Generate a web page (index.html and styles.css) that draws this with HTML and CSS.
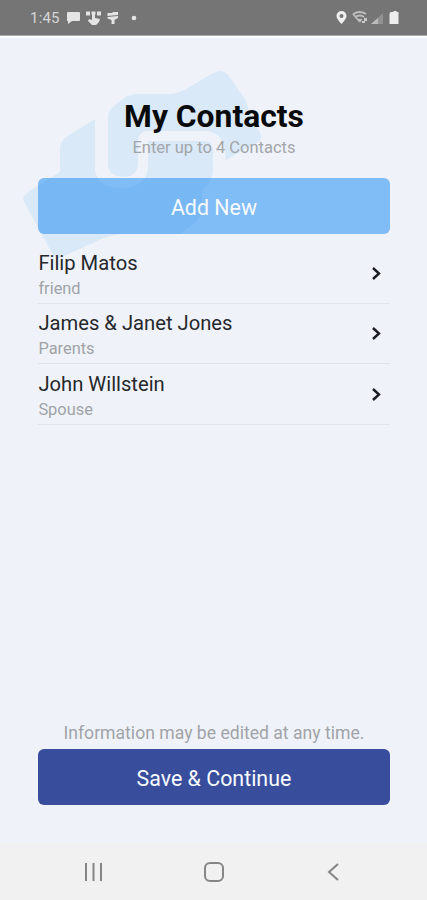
FILE: index.html
```
<!DOCTYPE html>
<html lang="en">
<head>
<meta charset="utf-8">
<title>My Contacts</title>
<link rel="stylesheet" href="styles.css">
</head>
<body>
<div class="screen">
  <header class="status">
    <span class="time">1:45</span>
    <svg class="status-left" width="72" height="16" viewBox="0 0 72 16" fill="#e4e4e4">
      <path d="M2 2h11q1 0 1 1v7q0 1-1 1H6l-4 3V11H1V3q0-1 1-1z"/>
      <path d="M20 1.500h4v4h-4zM25.500 1.500h4v3h-4zM31 1.500h4v4h-4zM26 4h3v4l5 1-1 3-3 3h-4l-4-4 1-2 3 1z"/>
      <path d="M41.500 3h4l2-1h4.500v3l-10.500 1zM41.500 7l10.500-1v2l-3.500 2v4h-3v-4l-4-1.500z"/>
      <circle cx="68" cy="8" r="2.300"/>
    </svg>
    <svg class="status-right" width="66" height="16" viewBox="0 0 66 16">
      <path fill="#eee" fill-rule="evenodd" d="M6.500 1a5 5 0 0 1 5 5c0 3-5 8-5 8s-5-5-5-8a5 5 0 0 1 5-5zm0 3a2 2 0 1 0 0 4 2 2 0 0 0 0-4z"/>
      <g fill="none" stroke="#bdbdbd" stroke-width="1.800"><path d="M18 4q7-4 13 0M20 7q5-3 9 0M18 4l7 8"/></g>
      <path d="M23 9h4l-1 3zM29 8h3v3h-3zM27 11h3v2h-3z" fill="#c8c8c8"/>
      <path d="M36 14L48 3v11z" fill="#929292"/><path d="M36 14l7-6v6z" fill="#bbb"/>
      <path d="M56.500 2h2V1h3v1h2v12h-9V4q0-2 2-2z" fill="#eee"/>
    </svg>
  </header>
  <main class="content">
    <svg class="watermark" width="250" height="200" viewBox="20 65 250 200" fill="#dae9f7">
      <path d="M108 165V117Q108 111 113 107L124 98Q130 94 137 94H172Q179 93 186 89L213 73Q222 68 228 75L245 99Q251 118 260 133Q264 139 257 143L226 160L225 149Q221 131 205 131H147Q138 132 138 141V164Q137 177 123 177Q109 176 108 165Z"/>
      <path d="M95 119V170Q98 188 121 188Q146 188 148 167V141H204Q213 141 213 150V172Q211 183 202 190V209Q201 219 190 227L180 234H121Q107 236 95 242L62 257Q56 259 52 253L24 202Q21 196 30 191L60 172V149Q60 142 66 137Z"/>
    </svg>
    <h1>My Contacts</h1>
    <p class="subtitle">Enter up to 4 Contacts</p>
    <button class="button add">Add New</button>
    <ul class="contacts">
      <li><div><div class="name">Filip Matos</div><div class="role">friend</div></div><svg width="12" height="16" viewBox="0 0 12 16"><path d="M2 3l6 5.500L2 14"/></svg></li>
      <li><div><div class="name">James &amp; Janet Jones</div><div class="role">Parents</div></div><svg width="12" height="16" viewBox="0 0 12 16"><path d="M2 3l6 5.500L2 14"/></svg></li>
      <li><div><div class="name">John Willstein</div><div class="role">Spouse</div></div><svg width="12" height="16" viewBox="0 0 12 16"><path d="M2 3l6 5.500L2 14"/></svg></li>
    </ul>
    <p class="note">Information may be edited at any time.</p>
    <button class="button save">Save &amp; Continue</button>
  </main>
  <nav class="nav">
    <svg width="20" height="20" viewBox="0 0 20 20"><path d="M2 1v18M9.500 1v18M17 1v18"/></svg>
    <svg width="20" height="20" viewBox="0 0 20 20"><rect x="1" y="1" width="18" height="18" rx="5"/></svg>
    <svg width="20" height="20" viewBox="0 0 20 20"><path d="M15 2L6 10l9 8"/></svg>
  </nav>
</div>
</body>
</html>
```
FILE: styles.css
```
* { box-sizing: border-box; }
body { margin: 0; font-family: Roboto, sans-serif; }
.screen { height: 900px; display: flex; flex-direction: column; background: #eff3f9; }
.status {
  height: 36px; flex: none; display: flex; align-items: center;
  padding: 0 26px 0 30px; background: #757575; border-bottom: 1px solid #a9a9a9;
}
.time { width: 36px; font-size: 15px; letter-spacing: .2px; color: #d6d6d6; }
.status-right { margin-left: auto; }
.content {
  position: relative; flex: 1; display: flex; flex-direction: column;
  padding: 60px 37.500px 38px 38.400px; border-top: 2px solid #fcfdff;
}
.watermark { position: absolute; left: 20px; top: 27px; }
h1, p, ul { margin: 0; padding: 0; position: relative; }
h1 { font-size: 31.800px; line-height: 36px; font-weight: 700; text-align: center; color: #08090b; }
.subtitle { margin-top: 4px; font-size: 16.500px; line-height: 20px; text-align: center; color: #a2a5aa; }
.button {
  position: relative; width: 100%; height: 56px; flex: none; border: 0; border-radius: 6px;
  font: 400 21.400px Roboto, sans-serif; color: #f8fbff; padding: 2px 0 0;
}
.add { margin-top: 20px; background: rgba(54, 151, 242, .6); }
.save { background: #384e9d; }
.contacts { list-style: none; margin-top: 9px; }
.contacts li {
  height: 60.500px; display: flex; align-items: center; justify-content: space-between;
  padding-right: 7px; border-bottom: 1px solid #e1e5eb;
}
.contacts li > div { padding-top: 5px; }
.contacts svg { fill: none; stroke: #191b1e; stroke-width: 2.400; }
.name { font-size: 20.200px; line-height: 26px; color: #26282c; }
.role { font-size: 16.400px; line-height: 25px; color: #a0a3a8; }
.note { margin-top: auto; font-size: 17.600px; line-height: 24px; text-align: center; color: #a0a3a8; padding-bottom: 4px; }
.nav {
  height: 57px; flex: none; display: flex; justify-content: space-between; align-items: center;
  padding: 0 84px; background: #f1f1f1;
}
.nav svg { fill: none; stroke: #858585; stroke-width: 2; }
```
